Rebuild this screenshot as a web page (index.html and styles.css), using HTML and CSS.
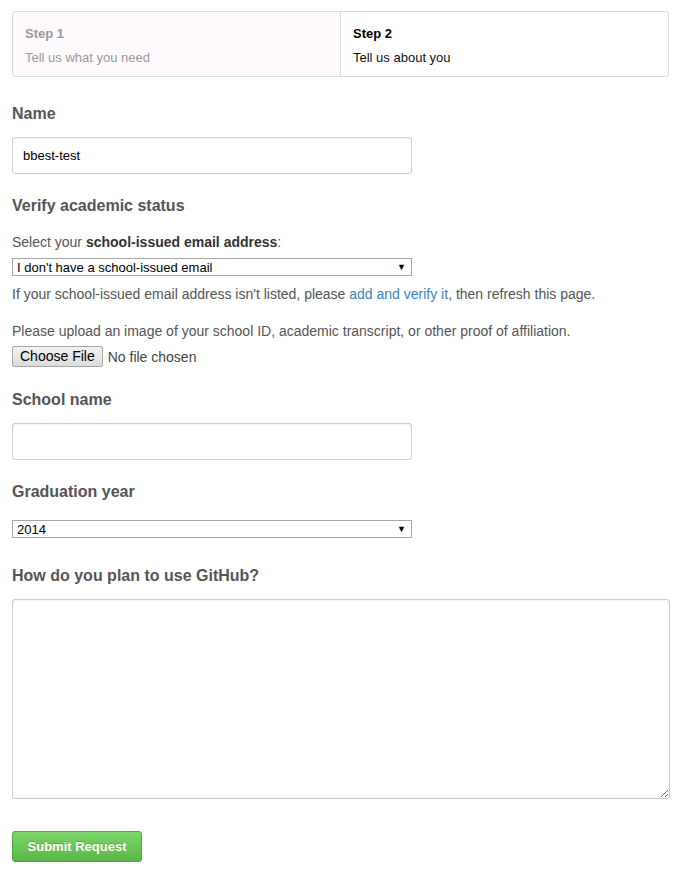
FILE: index.html
```html
<!DOCTYPE html>
<html>
<head>
<meta charset="utf-8">
<link rel="stylesheet" href="styles.css">
</head>
<body>
<div class="page">
  <div class="steps">
    <div class="step done">
      <div class="step-title">Step 1</div>
      <div class="step-desc">Tell us what you need</div>
    </div>
    <div class="step current">
      <div class="step-title">Step 2</div>
      <div class="step-desc">Tell us about you</div>
    </div>
  </div>

  <form class="form">
    <div class="group">
      <h3 class="label">Name</h3>
      <input class="text-input" type="text" value="bbest-test">
    </div>

    <div class="group">
      <h3 class="label">Verify academic status</h3>
      <p class="help first">Select your <strong>school-issued email address</strong>:</p>
      <div class="select"><span>I don't have a school-issued email</span><span class="arrow">▼</span></div>
      <p class="help after-select">If your school-issued email address isn't listed, please <a href="#">add and verify it</a>, then refresh this page.</p>
      <p class="help upload">Please upload an image of your school ID, academic transcript, or other proof of affiliation.</p>
      <div class="file-row"><span class="file-btn">Choose File</span><span class="file-none">No file chosen</span></div>
    </div>

    <div class="group">
      <h3 class="label">School name</h3>
      <input class="text-input" type="text" value="">
    </div>

    <div class="group year-group">
      <h3 class="label">Graduation year</h3>
      <div class="select year"><span>2014</span><span class="arrow">▼</span></div>
    </div>

    <div class="group">
      <h3 class="label">How do you plan to use GitHub?</h3>
      <textarea class="textarea"></textarea>
    </div>

    <div class="actions">
      <button type="button" class="submit">Submit Request</button>
    </div>
  </form>
</div>
</body>
</html>
```

FILE: styles.css
```css
* { box-sizing: border-box; }
body {
  margin: 0;
  font-family: "Liberation Sans", Arial, sans-serif;
  color: #333;
  background: #fff;
}
.page {
  padding: 11px 10px 0 12px;
}
.steps {
  display: flex;
  border: 1px solid #ddd;
  border-radius: 3px;
  height: 66px;
  overflow: hidden;
}
.step {
  flex: 1;
  padding: 13px 12px 0 12px;
}
.step.done {
  background: #fdf9fd;
  border-right: 1px solid #ddd;
  color: #999;
}
.step.current {
  color: #000;
}
.step-title {
  font-size: 13px;
  font-weight: bold;
  line-height: 18px;
}
.step-desc {
  font-size: 13px;
  line-height: 18px;
  margin-top: 6px;
}
.step.current .step-desc { color: #111; }

.form { margin: 0; padding-top: 27px; }
.group { margin-bottom: 22px; }
.year-group { margin-bottom: 28px; }
.label {
  margin: 0 0 13px 0;
  font-size: 16px;
  font-weight: bold;
  color: #555;
  line-height: 20px;
}
.text-input {
  display: block;
  width: 400px;
  height: 37px;
  border: 1px solid #ccc;
  border-radius: 3px;
  padding: 0 10px;
  font-family: "Liberation Sans", Arial, sans-serif;
  font-size: 13px;
  color: #000;
  box-shadow: inset 0 1px 2px rgba(0,0,0,0.06);
  outline: none;
}
.help {
  margin: 0;
  font-size: 14px;
  line-height: 18px;
  color: #555;
}
.help.first { margin-top: 17px; }
.help strong { color: #333; }
.help a { color: #4183c4; text-decoration: none; }
.select {
  display: flex;
  justify-content: space-between;
  align-items: center;
  width: 400px;
  height: 18px;
  margin-top: 7px;
  border: 1px solid #a6a6a6;
  padding: 0 5px 0 4px;
  font-size: 13px;
  color: #000;
  background: #fff;
}
.select .arrow { font-size: 9px; }
.after-select { margin-top: 9px; }
.upload { margin-top: 19px; }
.file-row {
  display: flex;
  align-items: center;
  margin-top: 6px;
  padding-bottom: 1px;
  font-size: 14px;
}
.file-btn {
  display: inline-block;
  height: 21px;
  line-height: 19px;
  padding: 0 7px;
  border: 1px solid #a6a6a6;
  border-radius: 2px;
  background: linear-gradient(#f2f2f2, #dcdcdc);
  color: #000;
}
.file-none { margin-left: 5px; color: #444; }
.year { margin-top: 18px; }
.textarea {
  display: block;
  width: 658px;
  height: 200px;
  border: 1px solid #ccc;
  border-radius: 3px;
  resize: vertical;
  box-shadow: inset 0 1px 2px rgba(0,0,0,0.06);
}
.actions { padding-top: 10px; }
.submit {
  width: 130px;
  height: 31px;
  border: 1px solid #4ba83b;
  border-radius: 3px;
  background: linear-gradient(#7cd66a, #5ab647);
  color: #fff;
  font-family: "Liberation Sans", Arial, sans-serif;
  font-size: 13px;
  font-weight: bold;
  text-shadow: 0 -1px 0 rgba(0,0,0,0.2);
  padding: 0;
}
```
